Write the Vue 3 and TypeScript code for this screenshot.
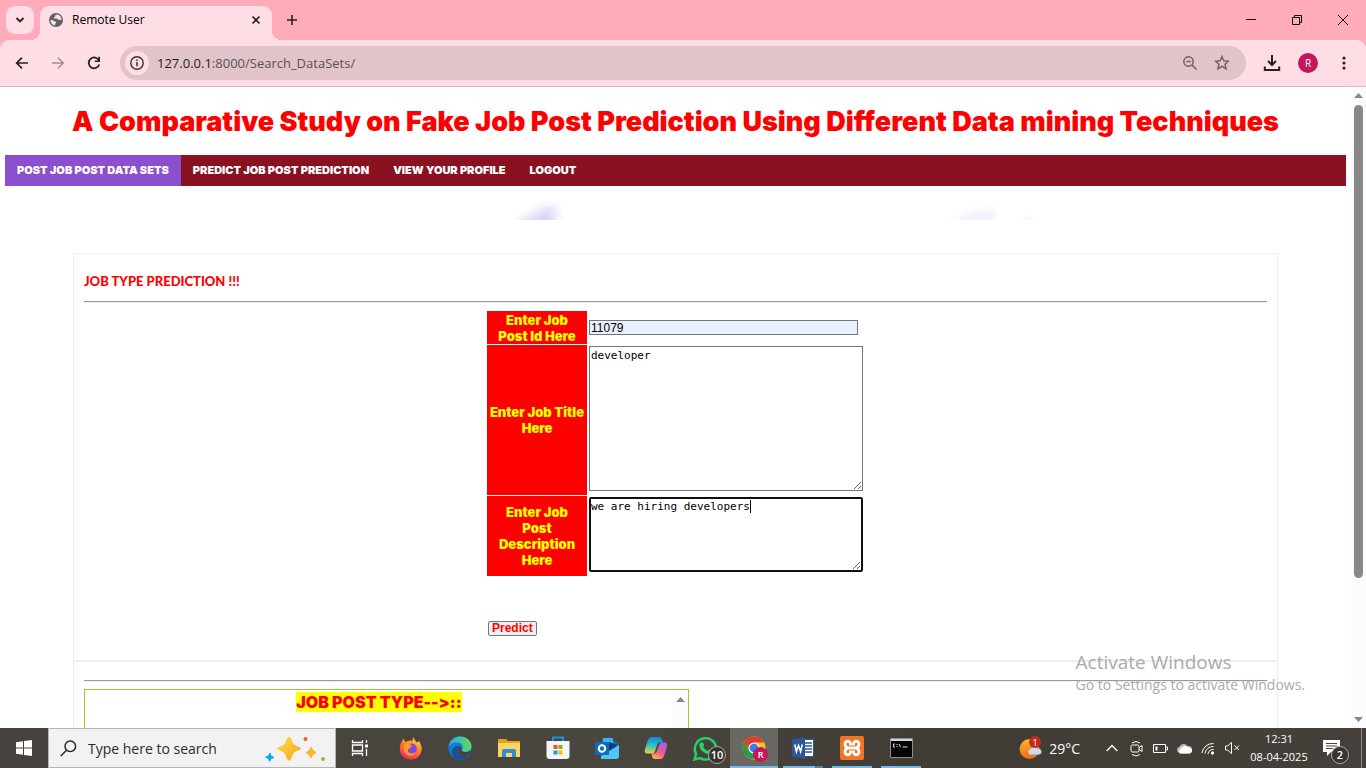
<script setup lang="ts">
import { ref } from 'vue'

interface NavItem {
  label: string
  active?: boolean
}

const navItems: NavItem[] = [
  { label: 'POST JOB POST DATA SETS', active: true },
  { label: 'PREDICT JOB POST PREDICTION' },
  { label: 'VIEW YOUR PROFILE' },
  { label: 'LOGOUT' },
]

const address = ref('127.0.0.1:8000/Search_DataSets/')
const jobId = ref('11079')
const jobTitle = ref('developer')
const description = ref('we are hiring developers')
const search = ref('')
</script>

<template>
  <div class="screen">
    <header class="tabstrip">
      <button class="tab-search" aria-label="Search tabs">
        <svg width="10" height="8" viewBox="0 0 10 8"><path d="M1.5 2 5 5.500 8.500 2" fill="none" stroke="#222" stroke-width="1.800" /></svg>
      </button>
      <div class="tab">
        <svg width="14" height="14" viewBox="0 0 14 14">
          <circle cx="7" cy="7" r="7" fill="#5f6368" />
          <path d="M8.200 1.600c-1.200.5-2 .6-2 1.600 0 .9-1.500.6-1.500 1.500 0 1 1.400.7 2.500.8 1.300.1 1.600 1.100 2.700 1.200.9.100 1.500.3 2.500.300A5.500 5.500 0 0 0 8.200 1.600ZM1.500 7c1.300.2 3 .1 3.800 1 .6.700 1.900.5 1.900 1.600 0 .8-1 .8-1 1.600v1.200A5.500 5.500 0 0 1 1.500 7Z" fill="#ffdde4" />
        </svg>
        <span class="tab-title">Remote User</span>
        <button class="bare" aria-label="Close tab">
          <svg width="10" height="10" viewBox="0 0 10 10"><path d="M1.500 1.500 8.500 8.500M8.500 1.500 1.500 8.500" stroke="#222" stroke-width="1.600" /></svg>
        </button>
      </div>
      <button class="bare new-tab" aria-label="New tab">
        <svg width="12" height="12" viewBox="0 0 12 12"><path d="M6 1v10M1 6h10" stroke="#222" stroke-width="1.600" /></svg>
      </button>
      <div class="window-controls">
        <button class="bare" aria-label="Minimize"><svg width="10" height="10" viewBox="0 0 10 10"><path d="M0 4.500h10" stroke="#000" /></svg></button>
        <button class="bare" aria-label="Restore"><svg width="10" height="10" viewBox="0 0 10 10"><path d="M.5 2.500h7v7h-7zM2.500 2.500v-2h7v7h-2" fill="none" stroke="#000" /></svg></button>
        <button class="bare" aria-label="Close"><svg width="10" height="10" viewBox="0 0 10 10"><path d="M0 0 10 10M10 0 0 10" stroke="#000" /></svg></button>
      </div>
    </header>

    <div class="toolbar">
      <button class="bare tool" aria-label="Back">
        <svg width="14" height="14" viewBox="0 0 14 14"><path d="M13 7H2M7 1.700 1.700 7 7 12.300" fill="none" stroke="#222" stroke-width="1.700" /></svg>
      </button>
      <button class="bare tool" aria-label="Forward">
        <svg width="14" height="14" viewBox="0 0 14 14"><path d="M1 7h11M7 1.700 12.300 7 7 12.300" fill="none" stroke="#a58d93" stroke-width="1.500" /></svg>
      </button>
      <button class="bare tool" aria-label="Reload">
        <svg width="14" height="14" viewBox="0 0 14 14"><path d="M12 4.500A5.400 5.400 0 1 0 12.300 8.500" fill="none" stroke="#222" stroke-width="1.800" /><path d="M13 .8V6H7.800V4.400h3.500V.8z" fill="#222" /></svg>
      </button>
      <div class="omnibox">
        <button class="site-info" aria-label="View site information">
          <svg width="14" height="14" viewBox="0 0 14 14"><circle cx="7" cy="7" r="6.200" fill="none" stroke="#333" stroke-width="1.400" /><path d="M7 6v4.300M7 3.500v1.600" stroke="#333" stroke-width="1.500" /></svg>
        </button>
        <a class="address" href="#"><b>{{ address.slice(0, 9) }}</b>{{ address.slice(9) }}</a>
        <button class="bare" aria-label="Zoom">
          <svg width="16" height="16" viewBox="0 0 16 16"><circle cx="6.500" cy="6.500" r="4.700" fill="none" stroke="#6d5f63" stroke-width="1.500" /><path d="M4.300 6.500h4.400M10 10l4.500 4.500" stroke="#6d5f63" stroke-width="1.500" /></svg>
        </button>
        <button class="bare" aria-label="Bookmark this tab">
          <svg width="16" height="16" viewBox="0 0 16 16"><path d="m8 1.500 1.800 4.300 4.700.4-3.500 3 1.100 4.600L8 11.400l-4.100 2.400L5 9.200l-3.500-3 4.700-.4z" fill="none" stroke="#6d5f63" stroke-width="1.400" /></svg>
        </button>
      </div>
      <button class="bare" aria-label="Downloads">
        <svg width="18" height="18" viewBox="0 0 18 18"><path d="M9 1v9.500M5 7l4 4 4-4M1.800 12.500V16h14.400v-3.500" fill="none" stroke="#222" stroke-width="2" /></svg>
      </button>
      <button class="avatar" aria-label="Profile">R</button>
      <button class="bare menu" aria-label="Menu">
        <svg width="4" height="14" viewBox="0 0 4 14" fill="#222"><circle cx="2" cy="2" r="1.600" /><circle cx="2" cy="7" r="1.600" /><circle cx="2" cy="12" r="1.600" /></svg>
      </button>
    </div>

    <div class="viewport">
      <main class="page">
        <h1>A Comparative Study on Fake Job Post Prediction Using Different Data mining Techniques</h1>
        <nav>
          <a v-for="item in navItems" :key="item.label" href="#" :class="{ active: item.active }">{{ item.label }}</a>
        </nav>
        <div class="banner">
          <svg viewBox="0 0 1341 34" preserveAspectRatio="none" aria-hidden="true">
            <defs><filter id="soft"><feGaussianBlur stdDeviation="3" /></filter></defs>
            <path d="M505 38 533 20 553 18 556 38z" fill="#efedfa" filter="url(#soft)" />
            <path d="M517 38 545 22 549 38z" fill="#d9d5f5" filter="url(#soft)" />
            <path d="M940 38 968 25 990 22V38zM1014 38l10-8 8 8z" fill="#f3f2fc" filter="url(#soft)" />
          </svg>
        </div>

        <section class="panel">
          <form class="predict" @submit.prevent>
            <h2>JOB TYPE PREDICTION !!!</h2>
            <hr />
            <table>
              <tbody>
                <tr class="id-row">
                  <th scope="row"><label for="job-id">Enter Job<br />Post Id Here</label></th>
                  <td class="middle"><input id="job-id" v-model="jobId" type="text" /></td>
                </tr>
                <tr class="title-row">
                  <th scope="row"><label for="job-title">Enter Job Title<br />Here</label></th>
                  <td><textarea id="job-title" v-model="jobTitle" class="title-box"></textarea></td>
                </tr>
                <tr class="description-row">
                  <th scope="row"><label for="job-description">Enter Job<br />Post<br />Description<br />Here</label></th>
                  <td>
                    <div class="field">
                      <textarea id="job-description" v-model="description" class="description-box"></textarea>
                      <span class="caret" :style="{ left: `calc(${description.length}ch + 2px)` }"></span>
                    </div>
                  </td>
                </tr>
                <tr class="submit-row">
                  <td colspan="2"><button type="submit">Predict</button></td>
                </tr>
              </tbody>
            </table>
          </form>
          <div class="result">
            <hr />
            <div class="result-box">
              <p><mark>JOB POST TYPE--&gt;::</mark></p>
              <div class="result-scroll">
                <svg width="9" height="5" viewBox="0 0 9 5"><path d="M0 5 4.500 0 9 5z" fill="#888" /></svg>
              </div>
            </div>
          </div>
        </section>
      </main>
      <div class="scrollbar">
        <svg width="9" height="5" viewBox="0 0 9 5"><path d="M0 5 4.500 0 9 5z" fill="#888" /></svg>
        <div class="track"><div class="thumb"></div></div>
        <svg width="9" height="5" viewBox="0 0 9 5"><path d="M0 0 4.500 5 9 0z" fill="#888" /></svg>
      </div>
      <aside class="watermark">
        <strong>Activate Windows</strong>
        <span>Go to Settings to activate Windows.</span>
      </aside>
    </div>

    <footer class="taskbar">
      <button class="task start" aria-label="Start">
        <svg width="16" height="16" viewBox="0 0 16 16" fill="#fff"><path d="M0 2.200 7 1.200V7.500H0zM8 1.100 16 0V7.500H8zM0 8.500h7v6.300L0 13.800zM8 8.500h8V16L8 14.900z" /></svg>
      </button>
      <label class="search">
        <svg width="17" height="17" viewBox="0 0 17 17"><circle cx="10.300" cy="6.300" r="5.300" fill="none" stroke="#222" stroke-width="1.400" /><path d="M6.500 10.200.8 16" stroke="#222" stroke-width="1.400" /></svg>
        <input v-model="search" type="text" placeholder="Type here to search" aria-label="Type here to search" />
        <svg width="62" height="28" viewBox="0 0 62 28">
          <defs><linearGradient id="spark" x1="0" y1="0" x2="1" y2="1"><stop offset="0" stop-color="#ffdc4a" /><stop offset="1" stop-color="#f2a91d" /></linearGradient></defs>
          <path d="M24 3q2 0 3 4 1 4 6 5.500 3 1 3 2t-3 2q-5 1.500-6 6-1 4-3 4t-3-4q-1-4.500-6-6-3-1-3-2t3-2q5-1.500 6-5.500 1-4 3-4Z" fill="url(#spark)" />
          <path d="M46 13q1.300 4 5 5.500-4 1.500-5 5.500-1.300-4-5-5.500 4-1.500 5-5.500Z" fill="#f8b92b" stroke="#f8b92b" />
          <path d="m5 19 1 3 3 1.500-3 1-1.500 3-1-3-3-1.500 3-1z" fill="#08a5ee" stroke="#08a5ee" />
          <circle cx="40.500" cy="5" r="2" fill="#f0642e" /><circle cx="58" cy="25" r="2" fill="#8ac43f" />
        </svg>
      </label>
      <button class="task" aria-label="Task view">
        <svg width="18" height="16" viewBox="0 0 18 16" fill="none" stroke="#fff" stroke-width="1.300"><path d="M1.500 0v2.500h10V0M1.500 5h10v6h-10zM1.500 16v-2.500h10V16M15.500 0v3M15.500 9v7" /><path d="M14 4.500h3v3h-3z" fill="#fff" stroke="none" /></svg>
      </button>
      <div class="apps">
        <button class="app" aria-label="Firefox">
          <svg width="24" height="24" viewBox="0 0 24 24">
            <defs><linearGradient id="fox" x1=".8" y1="0" x2=".3" y2="1"><stop offset="0" stop-color="#ffe03f" /><stop offset=".5" stop-color="#ff7a29" /><stop offset="1" stop-color="#f5235f" /></linearGradient></defs>
            <path d="M4 2.500 6.500 6 9 5l2-.5 2.500.5L14 1l3.500 5.500L20 5c2.500 4 3.500 7.500 2 11.500-1.500 4.500-5.500 7-10 7C5.500 23.500.8 19 .8 13c0-3 .7-5.500 2.200-7.500z" fill="url(#fox)" />
            <circle cx="12.300" cy="13" r="5.500" fill="#8049d8" /><path d="M6 8.500c3-2 6 0 7.500 1.500-2.500.2-1.500 2.500-4.500 3.500-1 4 5 5.500 8 2-1 5-8 6-11 1.500-1.500-2.500-2-6 0-8.500Z" fill="#ff9b25" />
          </svg>
        </button>
        <button class="app" aria-label="Edge">
          <svg width="24" height="24" viewBox="0 0 24 24">
            <defs><linearGradient id="edge" x1="0" y1=".4" x2="1" y2=".3"><stop offset="0" stop-color="#25a9ec" /><stop offset="1" stop-color="#62d95a" /></linearGradient></defs>
            <circle cx="12" cy="12" r="11.500" fill="#147bd1" />
            <path d="M.5 11.500C1 5 6 .5 12 .5c7 0 11.500 5 11.500 9.500 0 4-3 6-6 6-2.500 0-3.800-1-3.800-1.800 0-.7 1-1.200 1-3C14.700 8.500 12 6.600 9 6.600c-4 0-7.500 2-8.500 4.900Z" fill="url(#edge)" />
            <path d="M8.500 23C4 21 2 15 6 11.500c2-1.800 4.500-2 6-1-2.500 1-3.300 3-3 5 .5 4.500 6 6 12 3.500-3 4-8 5.500-12.500 4Z" fill="#10519b" />
            <path d="M12 10.500c1.500.8 2 2 1.500 3.200-.4.800.8 2.300 4 2.300 2 0 3.500-.6 4.500-1.500l1 2.500c-4 4-12 4.500-13.500-.5-.8-2.800.5-5 2.500-6Z" fill="#47423d" />
          </svg>
        </button>
        <button class="app" aria-label="File Explorer">
          <svg width="22" height="20" viewBox="0 0 22 20"><path d="M0 1h8l2 2h12v4H0z" fill="#e4a11b" /><path d="M0 5h22v14H0z" fill="#fdd466" /><path d="M4 19v-6q0-2 2-2h10q2 0 2 2v6h-4v-4H8v4z" fill="#318cd6" /></svg>
        </button>
        <button class="app" aria-label="Microsoft Store">
          <svg width="24" height="24" viewBox="0 0 24 24"><path d="M7 6V1.500h10V6" fill="none" stroke="#1995df" stroke-width="2" /><path d="M.5 5h23v15q0 3-3 3h-17q-3 0-3-3z" fill="#f5f5f5" /><path d="M7.500 9h4v4h-4z" fill="#f25022" /><path d="M12.500 9h4v4h-4z" fill="#7fba00" /><path d="M7.500 14.500h4v4h-4z" fill="#00a4ef" /><path d="M12.500 14.500h4v4h-4z" fill="#ffb900" /></svg>
        </button>
        <button class="app" aria-label="Outlook">
          <svg width="24" height="24" viewBox="0 0 24 24"><path d="m7 4 7-3 9 7v14H6z" fill="#1976c9" /><path d="M8 2h10v12H8z" fill="#35b8f1" /><path d="m14 6 9 3-10 8z" fill="#123e78" /><path d="M6 23h15q3 0 3-3V9L6 20z" fill="#50c8f3" /><path d="M0 6h14v13H0z" fill="#0f6cbd" /><circle cx="7" cy="12.500" r="3.200" fill="none" stroke="#fff" stroke-width="2" /></svg>
        </button>
        <button class="app" aria-label="Copilot">
          <svg width="24" height="24" viewBox="0 0 24 24">
            <defs>
              <linearGradient id="cop1" x1=".5" y1="0" x2=".4" y2="1"><stop offset="0" stop-color="#1683e0" /><stop offset=".5" stop-color="#2cc1c0" /><stop offset="1" stop-color="#e5d13c" /></linearGradient>
              <linearGradient id="cop2" x1=".7" y1="0" x2=".3" y2="1"><stop offset="0" stop-color="#a45bea" /><stop offset=".6" stop-color="#ef5d83" /><stop offset="1" stop-color="#ffad57" /></linearGradient>
            </defs>
            <path d="M16 23H11c-2 0-2.500-1-3-3l-.5-2.500h2c2 0 3-1 3.500-3l2-5c.5-2 1.500-3 3-3H21c2.500 0 2.500 2.500 2 4.500l-3 9c-.8 2-2 3-4 3Z" fill="url(#cop2)" />
            <path d="M8 1h7c2 0 2.500 1 3 3l1 2.500h-3c-2 0-2.500 1-3 3l-2 5.500c-.5 2-1.500 2.500-3 2.500H3C.5 17.500.5 15 1 13L4 4c.8-2 2-3 4-3Z" fill="url(#cop1)" />
          </svg>
        </button>
        <button class="app" aria-label="WhatsApp, 10 unread">
          <svg width="25" height="25" viewBox="0 0 25 25"><path d="m1.500 23.500 1.600-5.700A10.700 10.700 0 1 1 7 22z" fill="none" stroke="#25d366" stroke-width="2.400" /><path d="M8 6.500c2-.8 2.500 1 3 2.500.3.800-1 1.500-.7 2 1 2 2.400 3 4.200 3.800.6.200 1.200-1.500 2-1.200 3 1.200 2.500 1.500 2 3-1 2-4 2-7 .2-3-2-5.500-5-5.200-8 .2-1.300 1-2 1.700-2.300Z" fill="#25d366" /></svg>
          <span class="count">10</span>
        </button>
        <button class="app current" aria-label="Chrome">
          <svg width="24" height="24" viewBox="0 0 24 24"><circle cx="12" cy="12" r="11.500" fill="#fbc116" /><path d="M2 6.200A11.500 11.500 0 0 1 22 6.500H12L7 15z" fill="#e33b2e" /><path d="M2 6.200A11.500 11.500 0 0 0 11 23.500l5-8.500-9 0z" fill="#279b48" /><circle cx="12" cy="12" r="5.600" fill="#fff" /><circle cx="12" cy="12" r="4.400" fill="#3b7ded" /></svg>
          <span class="chrome-user">R</span>
        </button>
        <button class="app running stacked" aria-label="Word">
          <svg width="22" height="22" viewBox="0 0 22 22"><path d="M11 2.500h10.500v17H11z" fill="#fff" stroke="#2b579a" /><path d="M13 6h7M13 9h7M13 12h7M13 15h7" stroke="#2b579a" stroke-width="1.300" /><path d="m0 2.500 13-2.500v22L0 19.500z" fill="#2b579a" /><path d="m2.800 7.500 1.600 7 2.100-6 2.100 6 1.600-7" fill="none" stroke="#fff" stroke-width="1.600" /></svg>
        </button>
        <button class="app running" aria-label="XAMPP">
          <svg width="24" height="24" viewBox="0 0 24 24"><rect width="24" height="24" rx="2" fill="#f27425" /><path d="M10.500 9.500V8A2.700 2.700 0 0 0 5 8q0 3.500 3.500 4Q5 12.500 5 16a2.700 2.700 0 0 0 5.500 0v-1.500M13.500 9.500V8A2.700 2.700 0 0 1 19 8q0 3.500-3.500 4 3.500.5 3.500 4a2.700 2.700 0 0 1-5.500 0v-1.500M8.500 12h7" fill="none" stroke="#fff" stroke-width="2.800" /></svg>
        </button>
        <button class="app running" aria-label="Command Prompt">
          <svg width="23" height="20" viewBox="0 0 23 20"><path d="M.5.500h22v19H.5z" fill="#050505" stroke="#8d8d8d" /><path d="M1 1h21v2H1z" fill="#d5d5d5" /><path d="M5 6H3.500v3H5M7 6v1M7 8v1M9 6l1.500 3M12.500 9h5" fill="none" stroke="#ddd" /></svg>
        </button>
      </div>
      <div class="tray">
        <button class="tray-item weather">
          <svg width="24" height="24" viewBox="0 0 24 24"><defs><linearGradient id="sun" x1="0" y1="0" x2="0" y2="1"><stop offset="0" stop-color="#ffb52b" /><stop offset="1" stop-color="#f46c13" /></linearGradient></defs><circle cx="10.500" cy="13" r="10" fill="url(#sun)" /><path d="M11 18.500a2.800 2.800 0 0 1 .5-5.300 4 4 0 0 1 7-.5 3 3 0 0 1 1.700 5.800z" fill="#c3dcf8" /><circle cx="16" cy="6" r="6" fill="#c42b1c" /><text x="16" y="9.500" text-anchor="middle" font-size="9" fill="#fff">1</text></svg>
          <span>29°C</span>
        </button>
        <button class="tray-item" aria-label="Show hidden icons"><svg width="12" height="8" viewBox="0 0 12 8"><path d="m.7 7 5.300-5.500L11.300 7" fill="none" stroke="#fff" stroke-width="1.300" /></svg></button>
        <button class="tray-item" aria-label="Meet now"><svg width="13" height="17" viewBox="0 0 13 17" fill="none" stroke="#fff"><rect x="1" y="5" width="8" height="7" rx="1.500" /><path d="m9 7.500 3-2v6l-3-2M2 3Q6 0 10 3M2 14.500q4 3 8 0" /></svg></button>
        <button class="tray-item" aria-label="Battery"><svg width="15" height="9" viewBox="0 0 15 9"><path d="M.5.500h12v8H.5zM12.500 3h2v3h-2" fill="none" stroke="#fff" /><path d="M2.500 2.500h2v4h-2z" fill="#fff" /></svg></button>
        <button class="tray-item" aria-label="OneDrive"><svg width="17" height="11" viewBox="0 0 17 11"><path d="M4 10.500a3.500 3.500 0 0 1-.5-6.800A4.600 4.600 0 0 1 11.500 3 3.800 3.800 0 0 1 13 10.500z" fill="#bbb" /><path d="M4.500 10.500a2.500 2.500 0 0 1 .5-4.800 4.500 4.500 0 0 1 7.500-1.200 3 3 0 0 1 1 6z" fill="#fff" /></svg></button>
        <button class="tray-item" aria-label="Network"><svg width="14" height="14" viewBox="0 0 14 14" fill="none" stroke="#fff"><path d="M1 12A11 11 0 0 1 12.500 2.500M4 12.500A8 8 0 0 1 12.500 5.500M7 13a5 5 0 0 1 5.500-4.500" /><circle cx="11.500" cy="12" r="1.200" fill="#fff" /></svg></button>
        <button class="tray-item" aria-label="Sound muted"><svg width="15" height="12" viewBox="0 0 15 12" fill="none" stroke="#fff"><path d="M.5 4h2L6.500.500v11L2.500 8h-2zM9.500 3.500l4.500 4.500M14 3.500 9.500 8" /></svg></button>
        <div class="clock"><time>12:31</time><time>08-04-2025</time></div>
        <button class="tray-item notices" aria-label="Notifications">
          <svg width="17" height="17" viewBox="0 0 17 17"><path d="M0 0h17v12H8l-4 4v-4H0z" fill="#fff" /><path d="M3 3.500h11M3 6h11M3 8.500h7" stroke="#444" /></svg>
          <span class="count">2</span>
        </button>
      </div>
    </footer>
  </div>
</template>

<style>
body {
  margin: 0;
}
</style>

<style scoped>
* {
  box-sizing: border-box;
}
.screen {
  display: flex;
  flex-direction: column;
  height: 100vh;
  overflow: hidden;
  background: #fff;
  color: #000;
  font-family: "Open Sans", "Noto Sans", sans-serif;
}
button {
  padding: 0;
  border: 0;
  color: inherit;
  font: inherit;
}
svg {
  display: block;
  flex: none;
}
.bare {
  display: grid;
  place-items: center;
  background: none;
}
.tabstrip {
  display: flex;
  flex: none;
  align-items: center;
  height: 49px;
  margin-bottom: -9px;
  padding: 0 0 9px 6px;
  background: #ffabba;
}
.tab-search {
  display: grid;
  place-items: center;
  width: 28px;
  height: 28px;
  border-radius: 9px;
  background: #ffdde4;
}
.tab {
  position: relative;
  display: flex;
  align-items: center;
  align-self: flex-end;
  width: 232px;
  height: 34px;
  margin-left: 6px;
  padding: 0 11px 6px 9px;
  border-radius: 9px 9px 0 0;
  background: #ffdde4;
}
.tab::before,
.tab::after {
  content: "";
  position: absolute;
  bottom: 0;
  width: 9px;
  height: 9px;
}
.tab::before {
  right: 100%;
  background: radial-gradient(circle at 0 0, transparent 9px, #ffdde4 9px);
}
.tab::after {
  left: 100%;
  background: radial-gradient(circle at 100% 0, transparent 9px, #ffdde4 9px);
}
.tab-title {
  flex: 1;
  margin-left: 9px;
  font-size: 12px;
  line-height: 16px;
}
.new-tab {
  margin-left: 14px;
}
.window-controls {
  display: flex;
  gap: 36px;
  margin-left: auto;
  padding-right: 18px;
}
.toolbar {
  position: relative;
  display: flex;
  flex: none;
  align-items: center;
  height: 47px;
  padding: 0 20px 0 15px;
  border-bottom: 1px solid #d6bcc2;
  border-radius: 9px 9px 0 0;
  background: #ffdde4;
}
.tool {
  margin-right: 22px;
}
.omnibox {
  display: flex;
  flex: 1;
  align-items: center;
  gap: 16px;
  height: 34px;
  margin: 0 17px 0 -3px;
  padding: 0 16px 0 5px;
  border-radius: 17px;
  background: #e0c4ca;
}
.site-info {
  display: grid;
  place-items: center;
  width: 24px;
  height: 24px;
  border-radius: 50%;
  background: #ffdde4;
}
.address {
  flex: 1;
  margin-left: -8px;
  color: #5c5054;
  font-size: 13px;
  line-height: 20px;
  text-decoration: none;
}
.address b {
  color: #1f1f1f;
  font-weight: 400;
}
.avatar {
  width: 20px;
  height: 20px;
  margin: 0 24px 0 17px;
  border-radius: 50%;
  background: #c2185b;
  color: #fff;
  font-size: 10px;
  line-height: 20px;
}
.viewport {
  position: relative;
  display: flex;
  flex: 1;
  min-height: 0;
}
.page {
  flex: 1;
  min-width: 0;
  overflow: hidden;
  padding: 18px 5px 0;
}
h1,
nav,
th,
mark {
  font-family: Inter, "DejaVu Sans", sans-serif;
  font-feature-settings: "calt" 0;
  font-weight: 900;
}
h1 {
  margin: 0 0 16px;
  color: #f00;
  font-size: 27px;
  line-height: 34px;
  text-align: center;
  white-space: nowrap;
}
nav {
  display: flex;
  height: 31px;
  background: #8a1120;
}
nav a {
  padding: 0 12px;
  color: #fff;
  font-size: 11px;
  line-height: 31px;
  text-decoration: none;
}
nav a.active {
  background: #8c4fd0;
}
.banner {
  height: 34px;
  margin-bottom: 33px;
  overflow: hidden;
}
.banner svg {
  width: 100%;
  height: 34px;
}
.panel {
  margin: 0 68px;
  border: 1px solid #eee;
}
.predict {
  padding: 10px 10px 22px;
  border-bottom: 2px solid #eee;
}
h2 {
  margin: 7px 0 10px;
  color: #f00;
  font-family: Lato, sans-serif;
  font-size: 13px;
  font-weight: 900;
  line-height: 20px;
}
hr {
  height: 2px;
  margin: 0 0 7px;
  border: 0;
  border-top: 1px solid #999;
  border-bottom: 1px solid #eee;
}
table {
  margin: 0 auto;
  border-spacing: 1px;
}
th,
td {
  padding: 1px;
}
th {
  width: 100px;
  padding: 0;
  background: #f00;
  color: #ff0;
  font-size: 13px;
  line-height: 16px;
  text-align: center;
  white-space: nowrap;
}
td {
  vertical-align: top;
}
td.middle {
  vertical-align: middle;
}
#job-id {
  display: block;
  width: 269px;
  height: 15px;
  padding: 0 1px;
  border: 1px solid #767676;
  background: #e8f0fe;
  font: 12px "Liberation Sans", Arial, sans-serif;
}
textarea,
.field {
  font: 11px/13px "DejaVu Sans Mono", monospace;
}
textarea {
  display: block;
  width: 274px;
  padding: 2px 1px;
  border: 1px solid #767676;
  background: #fff;
  color: #000;
}
.id-row {
  height: 33px;
}
.title-row {
  height: 150px;
}
.title-box {
  height: 145px;
}
.description-row {
  height: 80px;
}
.field {
  position: relative;
}
.description-box {
  height: 75px;
  padding: 1px 0;
  border: 2px solid #101010;
  border-radius: 2px;
}
.caret {
  position: absolute;
  top: 3px;
  width: 1px;
  height: 13px;
  background: #000;
}
.submit-row td {
  padding-top: 44px;
}
.submit-row button {
  display: block;
  padding: 0 3px;
  border: 1px solid #767676;
  border-radius: 2px;
  background: #efefef;
  color: #f00;
  font: bold 12px/13px "Liberation Sans", Arial, sans-serif;
}
.result {
  padding: 18px 10px 0;
}
.result-box {
  display: flex;
  width: 605px;
  height: 100px;
  border: 1px solid #9acd32;
}
.result-box p {
  flex: 1;
  margin: 1px 0 0;
  text-align: center;
}
mark {
  display: inline-block;
  background: #ff0;
  color: #f00;
  font-size: 16px;
  line-height: 20px;
}
.result-scroll {
  width: 15px;
  padding: 7px 3px;
  background: #fcfcfc;
}
.scrollbar {
  display: flex;
  flex: none;
  flex-direction: column;
  align-items: center;
  width: 15px;
  padding: 6px 0;
  background: #fcfcfc;
}
.track {
  flex: 1;
  width: 9px;
  margin: 7px 0 6px;
}
.thumb {
  height: 78%;
  border-radius: 5px;
  background: #888;
}
.watermark {
  position: absolute;
  right: 61px;
  bottom: 33px;
  display: flex;
  flex-direction: column;
  color: #aaa;
}
.watermark strong {
  font-size: 19px;
  font-weight: 400;
  line-height: 26px;
}
.watermark span {
  font-size: 14px;
  line-height: 20px;
}
.taskbar {
  display: flex;
  flex: none;
  height: 40px;
  background: linear-gradient(90deg, #47423d, #49453f 45%, #403c34 70%, #45403b);
  color: #fff;
}
.task {
  display: grid;
  place-items: center;
  width: 48px;
  background: none;
}
.search {
  display: flex;
  align-items: center;
  width: 288px;
  padding: 0 8px 0 11px;
  border: 1px solid #b5b5b5;
  background: #f2f2f2;
}
.search input {
  flex: 1;
  min-width: 0;
  margin-left: 11px;
  padding: 0;
  border: 0;
  background: none;
  font: 14px "Open Sans", sans-serif;
}
.search input::placeholder {
  color: #2b2b2b;
  opacity: 1;
}
.apps {
  display: flex;
  gap: 1px;
  margin-left: 3px;
}
.app {
  position: relative;
  display: grid;
  place-items: center;
  width: 48px;
  background: none;
}
.current {
  background: #6b6763;
}
.current::after,
.running::after {
  content: "";
  position: absolute;
  right: 4px;
  bottom: 0;
  left: 4px;
  height: 2px;
  background: #76b9ed;
}
.current::after {
  right: 0;
  left: 0;
}
.stacked::after {
  border-right: 8px solid #557d9c;
}
.count,
.chrome-user {
  position: absolute;
  right: 3px;
  bottom: 4px;
  width: 18px;
  height: 18px;
  border: 1px solid #aaa;
  border-radius: 50%;
  background: #38342f;
  font-size: 11px;
  font-weight: 600;
  line-height: 16px;
  text-align: center;
}
.chrome-user {
  right: 10px;
  bottom: 6px;
  width: 15px;
  height: 15px;
  border: 0;
  background: #c2185b;
  font-size: 9px;
  line-height: 15px;
}
.tray {
  display: flex;
  align-items: center;
  margin-left: auto;
  padding-right: 4px;
}
.tray-item {
  position: relative;
  display: grid;
  place-items: center;
  width: 24px;
  height: 100%;
  background: none;
}
.weather {
  display: flex;
  align-items: center;
  gap: 6px;
  width: auto;
  margin-right: 20px;
  font-size: 14px;
}
.clock {
  display: flex;
  flex-direction: column;
  width: 70px;
  font-size: 11px;
  line-height: 18px;
  text-align: center;
}
.notices {
  width: 48px;
  padding-right: 12px;
  border-right: 1px solid #8b8883;
}
.notices .count {
  right: 12px;
}
</style>
